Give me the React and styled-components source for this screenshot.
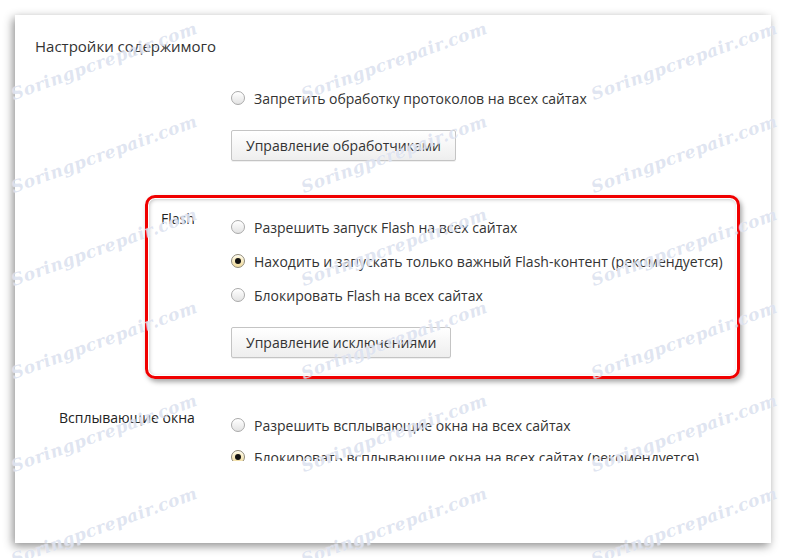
import React from 'react';
import styled, { createGlobalStyle, css } from 'styled-components';

const GlobalStyle = createGlobalStyle`
  html, body {
    margin: 0;
    padding: 0;
    background: #ffffff;
  }
  body {
    font-family: "Open Sans", "Noto Sans", sans-serif;
    color: #333333;
  }
`;

const Page = styled.div`
  position: relative;
  width: 787px;
  height: 558px;
  box-sizing: border-box;
  padding: 15px 16px 15px 15px;
  overflow: hidden;
  background: #ffffff;
`;

const Card = styled.div`
  width: 756px;
  height: 528px;
  display: flex;
  flex-direction: column;
  background: #ffffff;
  box-shadow: -2px 3px 9px rgba(0, 0, 0, 0.45);
`;

const Scroller = styled.div`
  height: 446px;
  overflow: hidden;
  box-sizing: border-box;
  padding: 21px 0 0 20px;
`;

const Footer = styled.div`
  flex: 1;
`;

const Heading = styled.h3`
  margin: 0;
  font-size: 15px;
  font-weight: 400;
  line-height: 20px;
  color: #333333;
`;

const Section = styled.div`
  display: grid;
  grid-template-columns: ${(p) => p.$label}px auto;
  margin-top: ${(p) => p.$top || 0}px;
  margin-left: ${(p) => p.$indent || 0}px;
`;

const Label = styled.div`
  font-size: 14px;
  line-height: 18px;
  color: #222222;
  white-space: nowrap;
`;

const Options = styled.div`
  display: flex;
  flex-direction: column;
  align-items: flex-start;
`;

const Row = styled.label`
  display: flex;
  align-items: center;
  gap: 9px;
  height: ${(p) => p.$h || 34}px;
  font-size: 14px;
  color: #333333;
  white-space: nowrap;
`;

const Radio = styled.span`
  position: relative;
  width: 14px;
  height: 14px;
  box-sizing: border-box;
  border-radius: 50%;
  border: 1px solid #a9a9a9;
  background: linear-gradient(#ffffff, #e3e3e3);
  box-shadow: inset 0 1px 1px rgba(255, 255, 255, 0.9);
  flex: none;

  ${(p) =>
    p.$checked &&
    css`
      border-color: #8f8a78;
      background: linear-gradient(#fff8dc, #f0dca0);
      &::after {
        content: '';
        position: absolute;
        left: 3px;
        top: 3px;
        width: 6px;
        height: 6px;
        border-radius: 50%;
        background: #111111;
      }
    `}
`;

const Button = styled.button`
  margin-top: 15px;
  height: 31px;
  padding: 0 14px;
  font-family: inherit;
  font-size: 14px;
  color: #333333;
  background: linear-gradient(#ffffff, #eeeeee);
  border: 1px solid #c4c4c4;
  border-radius: 2px;
  box-shadow: 0 1px 0 rgba(0, 0, 0, 0.06);
`;

const Highlight = styled.div`
  width: 595px;
  box-sizing: border-box;
  margin: 34px 0 0 110px;
  padding: 12px 0 18px 13px;
  border: 3px solid #f00000;
  border-radius: 10px;
  box-shadow: 2px 3px 5px rgba(0, 0, 0, 0.35), inset 0 0 0 1px #ffffff,
    inset 1px 1px 4px rgba(0, 0, 0, 0.3);
`;

const Watermarks = styled.div`
  position: absolute;
  inset: 0;
  display: grid;
  grid-template-columns: repeat(3, 290px);
  grid-auto-rows: 93px;
  justify-content: center;
  padding-top: 14px;
  pointer-events: none;
  overflow: hidden;
`;

const Mark = styled.div`
  display: flex;
  align-items: center;
  justify-content: center;
  font-family: "DejaVu Serif", serif;
  font-style: italic;
  font-weight: bold;
  font-size: 17px;
  letter-spacing: 0.5px;
  color: rgba(180, 192, 222, 0.42);
  text-shadow: 0 0 1px rgba(255, 255, 255, 0.9);
  transform: rotate(-20deg);
  white-space: nowrap;
`;

const Choice = ({ checked, h, children }) => (
  <Row $h={h}>
    <Radio $checked={checked} />
    {children}
  </Row>
);

export default function App() {
  return (
    <Page>
      <GlobalStyle />
      <Card>
        <Scroller>
          <Heading>Настройки содержимого</Heading>

          <Section $label={196} $top={25}>
            <div />
            <Options>
              <Choice>Запретить обработку протоколов на всех сайтах</Choice>
              <Button type="button">Управление обработчиками</Button>
            </Options>
          </Section>

          <Highlight>
            <Section $label={70}>
              <Label>Flash</Label>
              <Options>
                <Choice>Разрешить запуск Flash на всех сайтах</Choice>
                <Choice checked>
                  Находить и запускать только важный Flash-контент (рекомендуется)
                </Choice>
                <Choice>Блокировать Flash на всех сайтах</Choice>
                <Button type="button">Управление исключениями</Button>
              </Options>
            </Section>
          </Highlight>

          <Section $label={172} $top={30} $indent={24}>
            <Label>Всплывающие окна</Label>
            <Options>
              <Choice h={32}>Разрешить всплывающие окна на всех сайтах</Choice>
              <Choice h={32} checked>
                Блокировать всплывающие окна на всех сайтах (рекомендуется)
              </Choice>
            </Options>
          </Section>
        </Scroller>
        <Footer />
      </Card>

      <Watermarks>
        {Array.from({ length: 18 }).map((_, i) => (
          <Mark key={i}>Soringpcrepair.com</Mark>
        ))}
      </Watermarks>
    </Page>
  );
}
